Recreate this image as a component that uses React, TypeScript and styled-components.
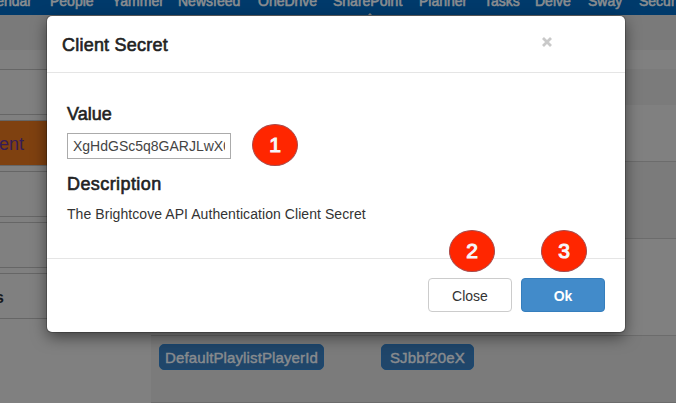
import React from 'react';
import styled, { createGlobalStyle } from 'styled-components';

const GlobalStyle = createGlobalStyle`
  * { box-sizing: border-box; }
  html, body { margin: 0; padding: 0; }
  body {
    overflow: hidden;
    font-family: "Liberation Sans", Arial, sans-serif;
    font-size: 14px;
    color: #222;
  }
`;

const Screen = styled.div`
  position: relative;
  width: 676px;
  height: 403px;
  overflow: hidden;
  background: #808080;
  display: flex;
  flex-direction: column;
`;

const TopNav = styled.nav`
  flex: none;
  height: 15px;
  background: #003a6b;
  display: flex;
  overflow: hidden;
`;

const NavItem = styled.span<{ $width: number; $spacing?: number }>`
  flex: none;
  width: ${(p) => p.$width}px;
  height: 20px;
  margin-top: -8px;
  line-height: 18px;
  font-size: 14px;
  letter-spacing: ${(p) => p.$spacing ?? 0}px;
  color: #8a8d90;
  -webkit-text-stroke: 0.6px #8a8d90;
  white-space: nowrap;
`;

const Calendar = styled(NavItem)`
  padding-right: 18px;
  display: flex;
  justify-content: flex-end;
`;

const ActiveCaret = styled.i`
  position: absolute;
  left: 368px;
  top: 13px;
  border: 2px solid transparent;
  border-top: 0;
  border-bottom-color: #808080;
`;

const Ribbon = styled.div`
  flex: none;
  height: 35px;
  background: #7a7a7a;
`;

const Spacer = styled.div`
  flex: none;
  height: 19px;
`;

const Page = styled.div`
  flex: 1;
  display: flex;
`;

const Sidebar = styled.aside`
  width: 151px;
  display: flex;
  flex-direction: column;
  gap: 5px;
`;

const SideItem = styled.div<{ $active?: boolean }>`
  height: 46px;
  width: 140px;
  border: 1px solid #666;
  border-left: 0;
  background: ${(p) => (p.$active ? '#7f4110' : '#808080')};
  color: ${(p) => (p.$active ? '#351c58' : '#15181c')};
  font-size: 18px;
  line-height: 46px;
`;

const SideLabel = styled.span<{ $shift: number; $bold?: boolean }>`
  display: inline-block;
  margin-left: ${(p) => p.$shift}px;
  font-weight: ${(p) => (p.$bold ? 700 : 400)};
  font-size: ${(p) => (p.$bold ? 16 : 18)}px;
  white-space: nowrap;
`;

const Table = styled.main`
  flex: 1;
  display: flex;
  flex-direction: column;
`;

const TableRow = styled.div<{ $height: number; $shaded?: boolean; $line?: boolean }>`
  flex: none;
  height: ${(p) => p.$height}px;
  background: ${(p) => (p.$shaded ? '#7b7b7b' : '#808080')};
  border-top: ${(p) => (p.$line ? '1px solid #6c6c6c' : '0')};
`;

const PlayerRow = styled(TableRow)`
  display: flex;
  align-items: flex-start;
  gap: 57px;
  padding: 8px 0 0 8px;
`;

const Tag = styled.span<{ $width: number; $spacing: number }>`
  width: ${(p) => p.$width}px;
  height: 26px;
  border: 1px solid #1b4871;
  border-radius: 5px;
  background: #20466a;
  color: #888b8e;
  -webkit-text-stroke: 0.45px #888b8e;
  font-size: 15px;
  line-height: 26px;
  letter-spacing: ${(p) => p.$spacing}px;
  text-align: center;
  white-space: nowrap;
`;

const Dialog = styled.section`
  position: absolute;
  left: 47px;
  top: 16px;
  width: 578px;
  height: 316px;
  border-radius: 5px;
  background: #fff;
  box-shadow: 0 0 0 1px rgba(0, 0, 0, 0.2), 0 5px 15px rgba(0, 0, 0, 0.5);
  display: flex;
  flex-direction: column;
`;

const DialogHeader = styled.header`
  height: 57px;
  border-bottom: 1px solid #e5e5e5;
  padding: 18px 72px 0 15px;
  display: flex;
  justify-content: space-between;
`;

const Heading = styled.h2<{ $spacing?: number }>`
  margin: 0;
  font-size: 18px;
  line-height: 22px;
  font-weight: 400;
  letter-spacing: ${(p) => p.$spacing ?? 0}px;
  color: #222;
  -webkit-text-stroke: 0.6px #222;
`;

const CloseIcon = styled.svg`
  width: 12px;
  height: 12px;
  margin-top: 2px;
`;

const DialogBody = styled.div`
  height: 185px;
  padding: 30px 20px 0;
`;

const ValueInput = styled.input`
  display: block;
  width: 164px;
  height: 26px;
  margin: 8px 0 14px;
  border: 1px solid #ababab;
  border-radius: 0;
  padding: 0 5px;
  background: #fff;
  color: #444;
  font: 14px "Liberation Sans", Arial, sans-serif;
  outline: none;
`;

const Description = styled.p`
  margin: 9px 0 0;
  font-size: 14px;
  line-height: 20px;
  letter-spacing: 0.065px;
  color: #333;
`;

const DialogFooter = styled.footer`
  flex: 1;
  border-top: 1px solid #e5e5e5;
  padding: 19px 20px 0;
  display: flex;
  justify-content: flex-end;
  gap: 9px;
`;

const Button = styled.button<{ $primary?: boolean }>`
  width: 84px;
  height: 34px;
  padding: 2px 0 0;
  border-radius: 4px;
  border: 1px solid ${(p) => (p.$primary ? '#357ebd' : '#ccc')};
  background: ${(p) => (p.$primary ? '#428bca' : '#fff')};
  color: ${(p) => (p.$primary ? '#fff' : '#333')};
  font: ${(p) => (p.$primary ? 700 : 400)} 14px "Liberation Sans", Arial, sans-serif;
`;

const Marker = styled.span<{ $x: number; $y: number }>`
  position: absolute;
  left: ${(p) => p.$x}px;
  top: ${(p) => p.$y}px;
  width: 46px;
  height: 42px;
  border: 1px solid #a94a4a;
  border-radius: 50%;
  background: #ff2600;
  color: #f6f6fa;
  font-size: 21px;
  font-weight: 400;
  -webkit-text-stroke: 1.1px #f6f6fa;
  line-height: 39px;
  text-align: center;
`;

const navItems = [
  { label: 'People', width: 62 },
  { label: 'Yammer', width: 66 },
  { label: 'Newsfeed', width: 80 },
  { label: 'OneDrive', width: 75 },
  { label: 'SharePoint', width: 86 },
  { label: 'Planner', width: 65 },
  { label: 'Tasks', width: 51 },
  { label: 'Delve', width: 53 },
  { label: 'Sway', width: 51 },
  { label: 'Security', width: 60 },
];

export default function App() {
  return (
    <>
      <GlobalStyle />
      <Screen>
        <TopNav>
          <Calendar $width={50}>Calendar</Calendar>
          {navItems.map((n) => (
            <NavItem key={n.label} $width={n.width}>{n.label}</NavItem>
          ))}
          <ActiveCaret />
        </TopNav>
        <Ribbon />
        <Spacer />
        <Page>
          <Sidebar>
            <SideItem />
            <SideItem $active><SideLabel $shift={-1}>ent</SideLabel></SideItem>
            <SideItem />
            <SideItem />
            <SideItem><SideLabel $shift={-5} $bold>s</SideLabel></SideItem>
          </Sidebar>
          <Table>
            <TableRow $height={36} $shaded />
            <TableRow $height={56} />
            <TableRow $height={77} $shaded $line />
            <TableRow $height={97} $line />
            <PlayerRow $height={67} $shaded $line>
              <Tag $width={165} $spacing={0.12}>DefaultPlaylistPlayerId</Tag>
              <Tag $width={93} $spacing={0.2}>SJbbf20eX</Tag>
            </PlayerRow>
            <TableRow $height={10} $line />
          </Table>
        </Page>

        <Dialog>
          <DialogHeader>
            <Heading $spacing={0.22}>Client Secret</Heading>
            <CloseIcon viewBox="0 0 12 12" aria-label="Close dialog">
              <path d="M2 2 10 10M10 2 2 10" stroke="#c9c9c9" strokeWidth="2.8" fill="none" />
            </CloseIcon>
          </DialogHeader>
          <DialogBody>
            <Heading>Value</Heading>
            <ValueInput defaultValue="XgHdGSc5q8GARJLwX0" />
            <Heading $spacing={0.42}>Description</Heading>
            <Description>The Brightcove API Authentication Client Secret</Description>
          </DialogBody>
          <DialogFooter>
            <Button>Close</Button>
            <Button $primary>Ok</Button>
          </DialogFooter>
        </Dialog>

        <Marker $x={252} $y={124}>1</Marker>
        <Marker $x={449} $y={230}>2</Marker>
        <Marker $x={541} $y={230}>3</Marker>
      </Screen>
    </>
  );
}
